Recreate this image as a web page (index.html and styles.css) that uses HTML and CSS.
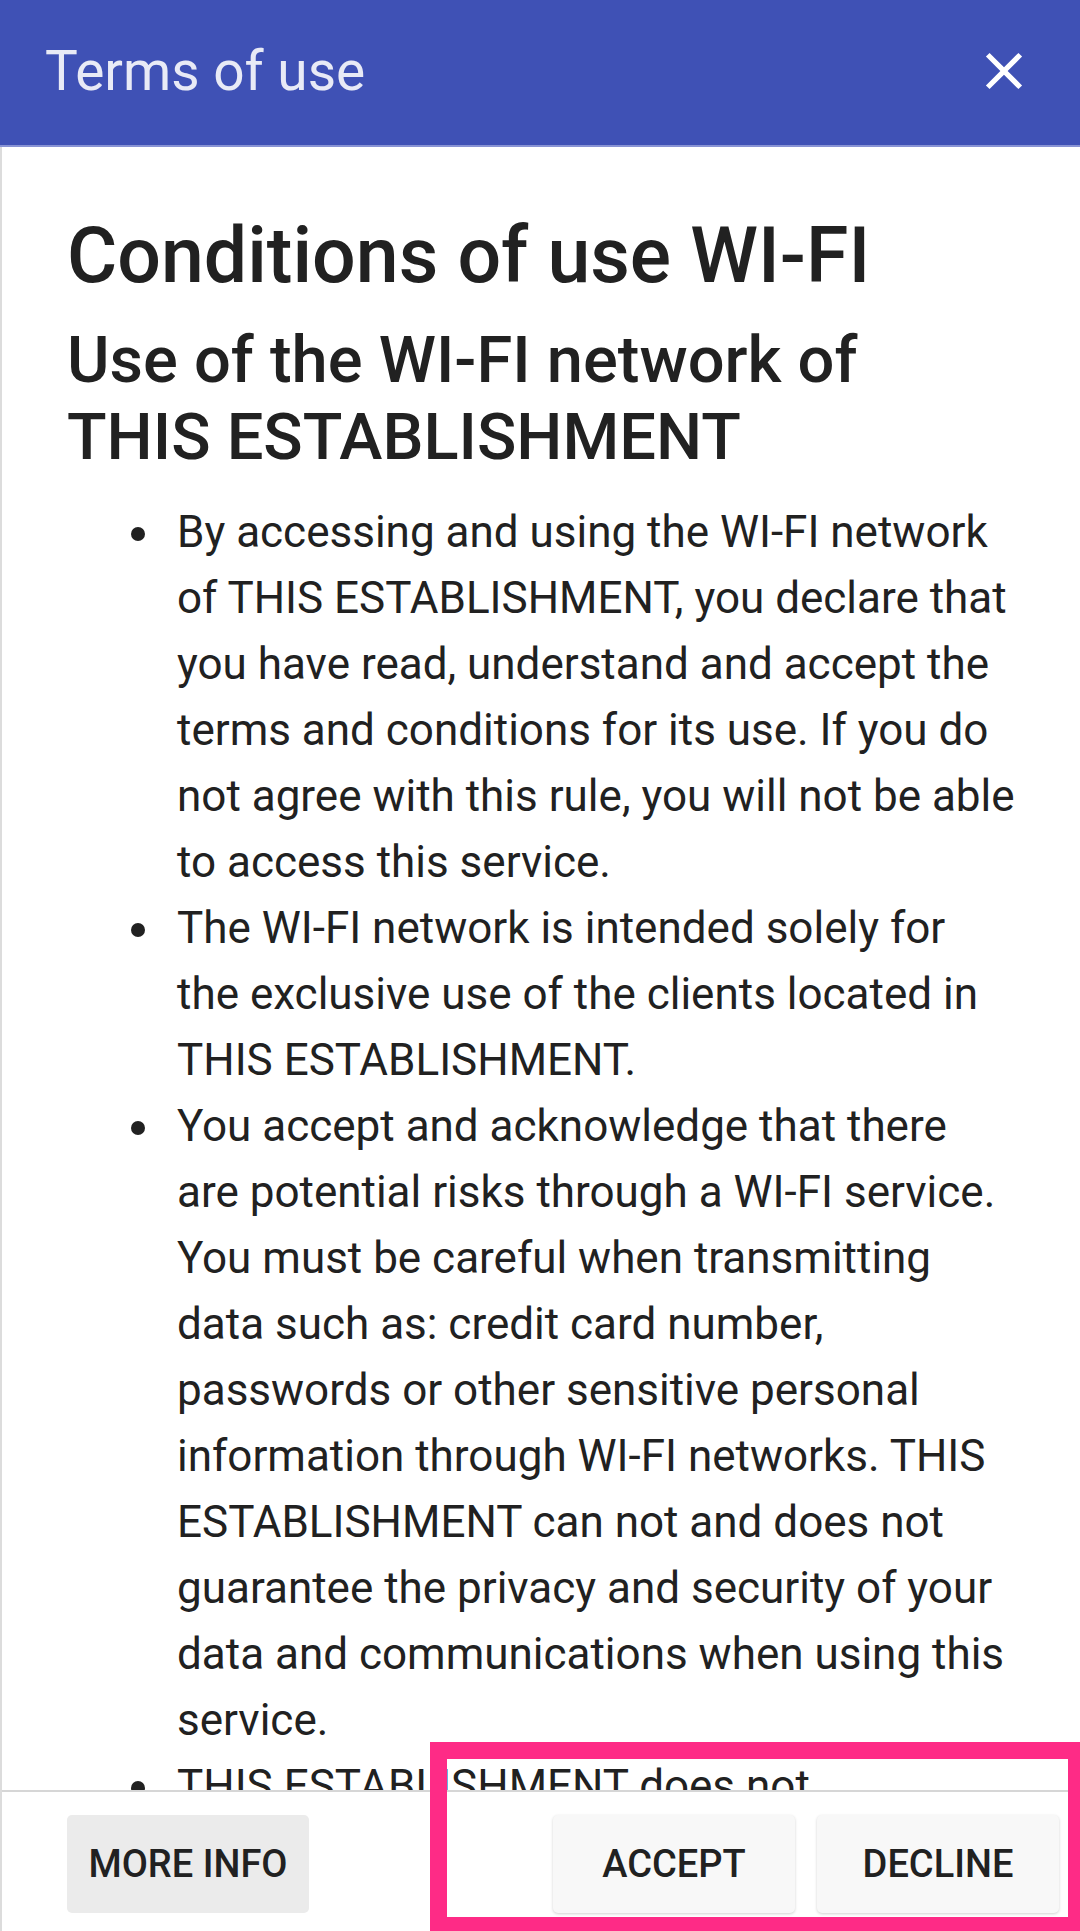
FILE: index.html
```html
<!DOCTYPE html>
<html lang="en">
<head>
<meta charset="utf-8">
<title>Terms of use</title>
<link rel="stylesheet" href="styles.css">
</head>
<body>
<div class="app">
  <header class="topbar">
    <span class="topbar-title">Terms of use</span>
    <svg class="close-icon" viewBox="0 0 24 24" aria-label="Close"><path d="M19 6.41L17.59 5 12 10.59 6.41 5 5 6.41 10.59 12 5 17.59 6.41 19 12 13.41 17.59 19 19 17.59 13.41 12z"/></svg>
  </header>
  <main class="content">
    <h1 class="title">Conditions of use WI-FI</h1>
    <h2 class="subtitle">Use of the WI-FI network of THIS ESTABLISHMENT</h2>
    <ul class="terms">
      <li>By accessing and using the WI-FI network of THIS ESTABLISHMENT, you declare that you have read, understand and accept the terms and conditions for its use. If you do not agree with this rule, you will not be able to access this service.</li>
      <li>The WI-FI network is intended solely for the exclusive use of the clients located in THIS ESTABLISHMENT.</li>
      <li>You accept and acknowledge that there are potential risks through a WI-FI service. You must be careful when transmitting data such as: credit card number, passwords or other sensitive personal information through WI-FI networks. THIS ESTABLISHMENT can not and does not guarantee the privacy and security of your data and communications when using this service.</li>
      <li>THIS ESTABLISHMENT does not necessarily control the content accessed through the network.</li>
    </ul>
  </main>
  <footer class="actions">
    <button class="btn btn-flat">MORE INFO</button>
    <div class="actions-right">
      <button class="btn btn-raised">ACCEPT</button>
      <button class="btn btn-raised">DECLINE</button>
    </div>
  </footer>
  <div class="highlight"></div>
</div>
</body>
</html>
```

FILE: styles.css
```css
* { box-sizing: border-box; }
html, body { margin: 0; padding: 0; }
body {
  width: 1080px;
  height: 1931px;
  overflow: hidden;
  font-family: Roboto, "Noto Sans", sans-serif;
  background: #ffffff;
  color: #212121;
}
.app {
  position: relative;
  width: 1080px;
  height: 1931px;
  display: flex;
  flex-direction: column;
  border-left: 2px solid #dcdcdc;
}
.topbar {
  flex: 0 0 147px;
  background: #3f51b5;
  border-bottom: 2px solid #8893d4;
  margin-left: -2px;
  display: flex;
  align-items: center;
  justify-content: space-between;
  padding: 0 45px 4px 45px;
}
.topbar-title {
  font-size: 55px;
  color: #e8eaf6;
  font-weight: 400;
}
.close-icon {
  width: 62px;
  height: 62px;
  fill: #ffffff;
}
.content {
  flex: 1 1 auto;
  overflow: hidden;
  padding: 62px 65px 0 65px;
}
.title {
  margin: 0;
  font-size: 77px;
  line-height: 94px;
  font-weight: 500;
}
.subtitle {
  margin: 19px 0 0;
  font-size: 65px;
  line-height: 77px;
  font-weight: 500;
}
.terms {
  list-style: none;
  margin: 23px 0 0;
  padding-left: 110px;
  font-size: 44px;
  line-height: 66px;
}
.terms li {
  position: relative;
  margin: 0;
}
.terms li::before {
  content: "";
  position: absolute;
  left: -46px;
  top: 28px;
  width: 14px;
  height: 14px;
  border-radius: 50%;
  background: #212121;
}
.actions {
  flex: 0 0 141px;
  border-top: 2px solid #d6d6d6;
  display: flex;
  align-items: flex-start;
  justify-content: space-between;
  padding: 23px 21px 0 65px;
}
.actions-right {
  display: flex;
  gap: 22px;
}
.btn {
  font-family: Roboto, "Noto Sans", sans-serif;
  font-size: 38px;
  font-weight: 500;
  color: #212121;
  border: none;
  border-radius: 5px;
  height: 98px;
  padding: 0 19px;
  min-width: 242px;
}
.btn-flat {
  background: #ebebeb;
}
.btn-raised {
  background: #f8f8f8;
  box-shadow: 0 1px 3px rgba(0,0,0,0.18);
}
.highlight {
  position: absolute;
  left: 428px;
  top: 1742px;
  width: 652px;
  height: 189px;
  border-style: solid;
  border-color: #fe2b86;
  border-width: 17px 14px 14px 17px;
}
```
